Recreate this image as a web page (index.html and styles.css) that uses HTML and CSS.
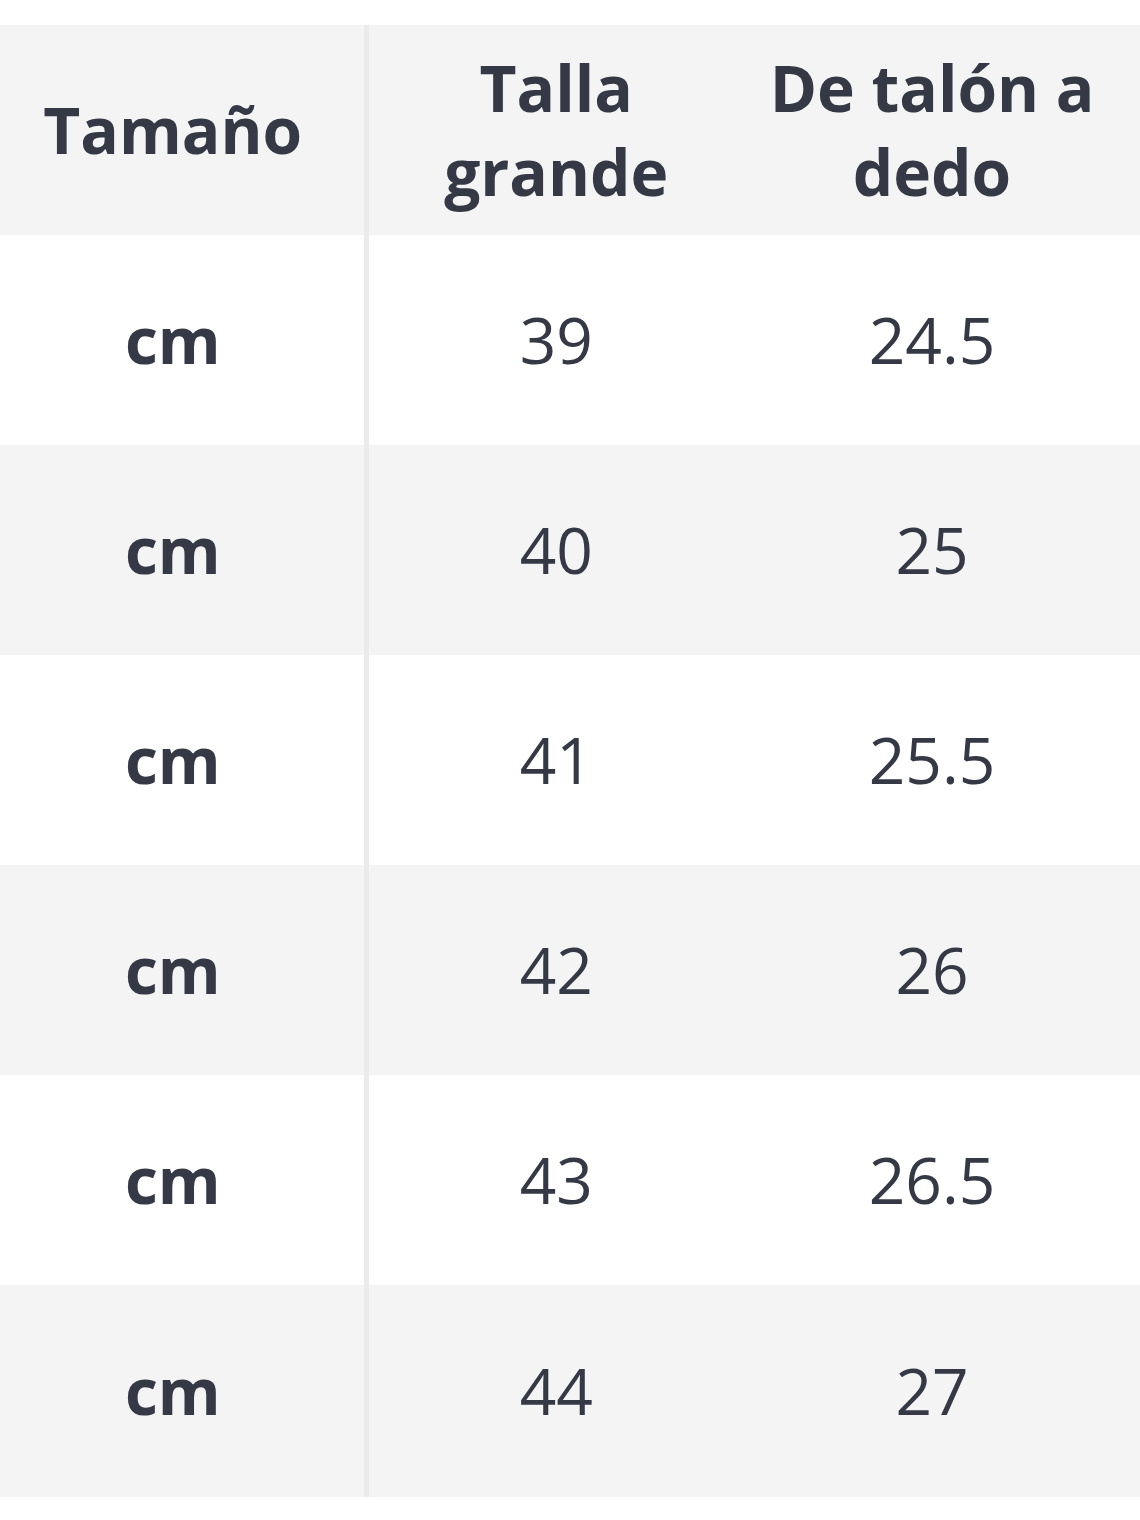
FILE: index.html
```html
<!DOCTYPE html>
<html lang="es">
<head>
<meta charset="utf-8">
<title>Tabla de tallas</title>
<link rel="stylesheet" href="styles.css">
</head>
<body>
<table class="size-table">
  <thead>
    <tr>
      <th class="col-size">Tamaño</th>
      <th class="col-big">Talla grande</th>
      <th class="col-heel">De talón a dedo</th>
    </tr>
  </thead>
  <tbody>
    <tr><th>cm</th><td>39</td><td>24.5</td></tr>
    <tr><th>cm</th><td>40</td><td>25</td></tr>
    <tr><th>cm</th><td>41</td><td>25.5</td></tr>
    <tr><th>cm</th><td>42</td><td>26</td></tr>
    <tr><th>cm</th><td>43</td><td>26.5</td></tr>
    <tr><th>cm</th><td>44</td><td>27</td></tr>
  </tbody>
</table>
</body>
</html>
```
FILE: styles.css
```css
html, body {
  margin: 0;
  padding: 0;
  background: #ffffff;
}

body {
  padding-top: 25px;
  font-family: "Open Sans", "Noto Sans", sans-serif;
  color: #353945;
}

.size-table {
  width: 1140px;
  border-collapse: collapse;
  table-layout: fixed;
}

.size-table th,
.size-table td {
  height: 210px;
  padding: 0 18px;
  text-align: center;
  vertical-align: middle;
  font-size: 64px;
  line-height: 84px;
  box-sizing: border-box;
}

.size-table th {
  font-weight: 700;
}

.size-table td {
  font-weight: 400;
}

.col-size { width: 366px; }
.col-big { width: 378px; }
.col-heel { width: 396px; }

.size-table tr > :first-child {
  border-right: 5px solid #ebebeb;
  padding-right: 36px;
}

.size-table thead tr,
.size-table tbody tr:nth-child(even) {
  background: #f4f4f4;
}

.size-table tbody tr:last-child > * {
  height: 212px;
}

.size-table tr > :last-child {
  padding-left: 18px;
  padding-right: 38px;
}
```
